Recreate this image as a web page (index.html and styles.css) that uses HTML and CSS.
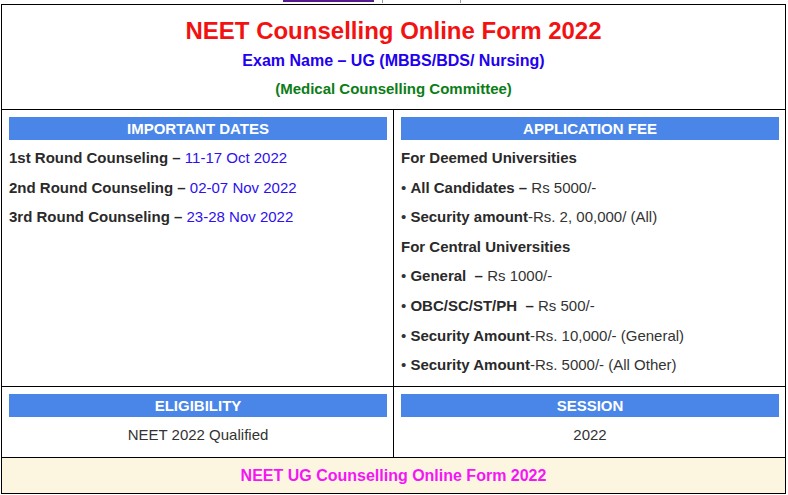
FILE: index.html
```html
<!DOCTYPE html>
<html>
<head>
<meta charset="utf-8">
<link rel="stylesheet" href="styles.css">
</head>
<body>
<div class="page">
  <div class="topstrip">
    <span class="visited"></span>
    <span class="sep sep1"></span>
    <span class="sep sep2"></span>
  </div>
  <div class="grid">
    <div class="cell head">
      <h1 class="title">NEET Counselling Online Form 2022</h1>
      <p class="sub">Exam Name – UG (MBBS/BDS/ Nursing)</p>
      <p class="org">(Medical Counselling Committee)</p>
    </div>

    <div class="cell box">
      <div class="bar">IMPORTANT DATES</div>
      <p class="line"><b>1st Round Counseling –</b> <span class="date">11-17 Oct 2022</span></p>
      <p class="line"><b>2nd Round Counseling –</b> <span class="date">02-07 Nov 2022</span></p>
      <p class="line"><b>3rd Round Counseling –</b> <span class="date">23-28 Nov 2022</span></p>
    </div>
    <div class="cell box">
      <div class="bar">APPLICATION FEE</div>
      <p class="line"><b>For Deemed Universities</b></p>
      <p class="line">• <b>All Candidates –</b> Rs 5000/-</p>
      <p class="line">• <b>Security amount</b>-Rs. 2, 00,000/ (All)</p>
      <p class="line"><b>For Central Universities</b></p>
      <p class="line">• <b>General &nbsp;–</b> Rs 1000/-</p>
      <p class="line">• <b>OBC/SC/ST/PH &nbsp;–</b> Rs 500/-</p>
      <p class="line">• <b>Security Amount</b>-Rs. 10,000/- (General)</p>
      <p class="line">• <b>Security Amount</b>-Rs. 5000/- (All Other)</p>
    </div>

    <div class="cell box">
      <div class="bar">ELIGIBILITY</div>
      <p class="line center low">NEET 2022 Qualified</p>
    </div>
    <div class="cell box">
      <div class="bar">SESSION</div>
      <p class="line center low">2022</p>
    </div>

    <div class="cell foot">NEET UG Counselling Online Form 2022</div>
  </div>
</div>
</body>
</html>
```

FILE: styles.css
```css
html, body {
  margin: 0;
  padding: 0;
  background: #fff;
}

body {
  font-family: "Liberation Sans", Arial, sans-serif;
  color: #333;
}

.page {
  margin-left: 1px;
  width: 785px;
}

.topstrip {
  height: 4px;
  display: flex;
  align-items: flex-start;
  padding-left: 282px;
  overflow: hidden;
}

.visited {
  display: block;
  width: 91px;
  height: 2px;
  background: #551a8b;
}

.sep {
  display: block;
  width: 1px;
  height: 3px;
  background: #9a9a9a;
}

.sep1 {
  margin-left: 8px;
}

.sep2 {
  margin-left: 77px;
}

.grid {
  display: grid;
  grid-template-columns: 391px 391px;
  grid-template-rows: 104px 276px 70px 35px;
  gap: 1px;
  background: #000;
  border: 1px solid #000;
}

.cell {
  background: #fff;
}

.head {
  grid-column: 1 / 3;
  text-align: center;
  padding-top: 11px;
}

.title {
  margin: 0;
  font-size: 24px;
  line-height: 30px;
  font-weight: bold;
  color: #f21212;
}

.sub {
  margin: 0;
  font-size: 16px;
  line-height: 30px;
  font-weight: bold;
  color: #2200f0;
}

.org {
  margin: 0;
  font-size: 15px;
  line-height: 26px;
  font-weight: bold;
  color: #0b7d17;
}

.box {
  padding: 7px 6px 0 7px;
}

.bar {
  height: 23px;
  line-height: 23px;
  background: #4a86e8;
  color: #fff;
  font-weight: bold;
  font-size: 15px;
  text-align: center;
  margin-bottom: 3px;
}

.line {
  margin: 0;
  font-size: 15px;
  line-height: 29.6px;
  color: #333;
  white-space: nowrap;
}

.line b {
  color: #2a2a2a;
}

.date {
  color: #2d10f0;
}

.center {
  text-align: center;
}

.low {
  margin-top: 1px;
}

.foot {
  grid-column: 1 / 3;
  background: #fcf6e1;
  text-align: center;
  font-size: 16px;
  font-weight: bold;
  line-height: 35px;
  color: #f515f5;
}
```
